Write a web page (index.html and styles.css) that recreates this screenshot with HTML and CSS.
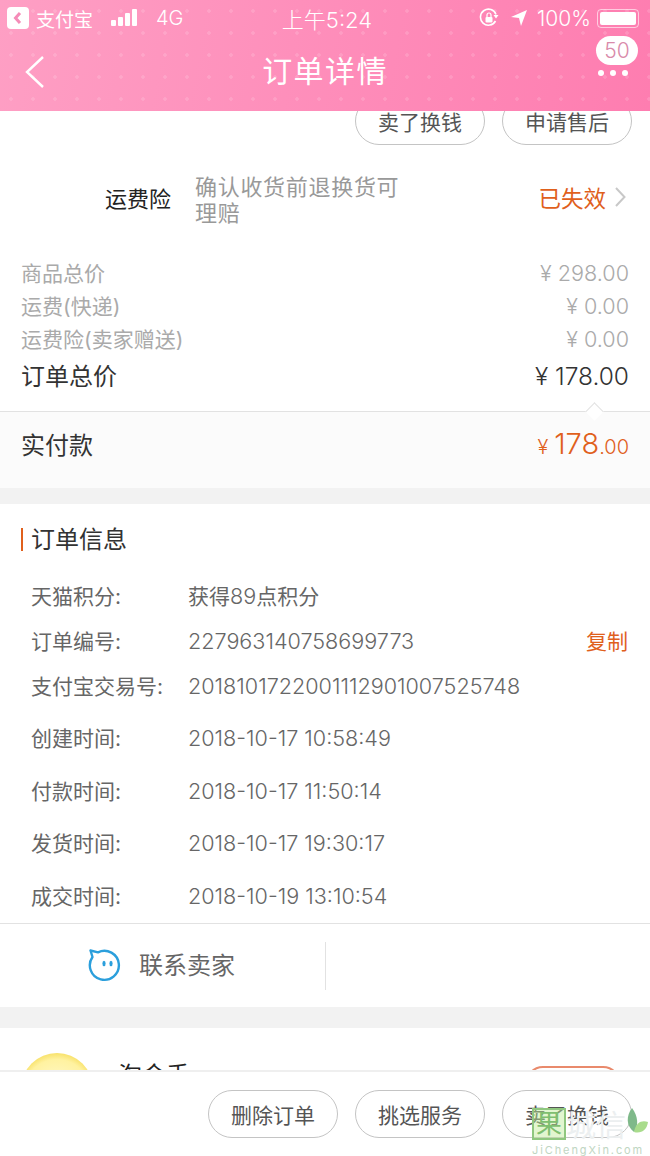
FILE: index.html
```html
<!DOCTYPE html>
<html lang="zh-CN">
  <head>
    <meta charset="UTF-8">
    <title>订单详情</title>
    <link rel="stylesheet" href="styles.css">
  </head>
  <body>
    <div class="page">

      <header class="top">
        <div class="status">
          <div class="status-left">
            <span class="app-back">
              <svg width="22" height="22" viewBox="0 0 22 22"><rect width="22" height="22" rx="4" fill="#fff"/><path d="M13 6 L8.5 11 L13 16" fill="none" stroke="#f58cb8" stroke-width="3"/></svg>
            </span>
            <span class="app-name">支付宝</span>
            <svg class="signal" width="28" height="18" viewBox="0 0 28 18"><g fill="#fff"><rect x="0" y="11" width="5" height="6" rx="1"/><rect x="7" y="8" width="5" height="9" rx="1"/><rect x="14" y="4" width="5" height="13" rx="1"/><rect x="21" y="0" width="5" height="17" rx="1"/></g></svg>
            <span class="net">4G</span>
          </div>
          <div class="clock">上午5:24</div>
          <div class="status-right">
            <svg width="20" height="20" viewBox="0 0 20 20"><path d="M16.5 13 A8 8 0 1 1 17 6.5" fill="none" stroke="#fff" stroke-width="1.6"/><path d="M14.5 7 L19.5 7 L17 10.5 Z" fill="#fff"/><rect x="6.5" y="9" width="7" height="5.5" rx="1" fill="#fff"/><path d="M8 9 V7 A2 2 0 0 1 12 7 V9" fill="none" stroke="#fff" stroke-width="1.2"/></svg>
            <svg class="arrow" width="16" height="16" viewBox="0 0 16 16"><path d="M16 0 L0 7 L8 8 L10 16 Z" fill="#fff"/></svg>
            <span class="pct">100%</span>
            <span class="battery"><span class="battery-fill"></span></span>
          </div>
        </div>
        <div class="nav">
          <svg class="nav-back" width="20" height="32" viewBox="0 0 20 32"><path d="M18 1 L2 16 L18 31" fill="none" stroke="#fff" stroke-width="2.4"/></svg>
          <h1>订单详情</h1>
          <div class="more">
            <span class="more-badge">50</span>
            <span class="more-dots"><i></i><i></i><i></i></span>
          </div>
        </div>
      </header>

      <div class="content">
        <div class="cut-actions">
          <span class="pill">卖了换钱</span>
          <span class="pill">申请售后</span>
        </div>

        <div class="insure">
          <span class="insure-name">运费险</span>
          <span class="insure-note">确认收货前退换货可理赔</span>
          <span class="insure-state">已失效</span>
          <svg width="12" height="20" viewBox="0 0 12 20"><path d="M2 1 L10.5 10 L2 19" fill="none" stroke="#c8c8c8" stroke-width="2"/></svg>
        </div>

        <div class="prices">
          <div class="price-row"><span>商品总价</span><span class="num">¥ 298.00</span></div>
          <div class="price-row"><span>运费(快递)</span><span class="num">¥ 0.00</span></div>
          <div class="price-row"><span>运费险(卖家赠送)</span><span class="num">¥ 0.00</span></div>
          <div class="price-row total"><span>订单总价</span><span class="num">¥ 178.00</span></div>
        </div>

        <div class="paid">
          <span class="paid-notch"></span>
          <span>实付款</span>
          <span class="paid-num"><small class="yen">¥</small>178<small>.00</small></span>
        </div>

        <div class="gap"></div>

        <section class="info">
          <h2>订单信息</h2>
          <div class="info-row"><span class="info-key">天猫积分:</span><span>获得<span class="num">89</span>点积分</span></div>
          <div class="info-row"><span class="info-key">订单编号:</span><span class="num">227963140758699773</span><span class="copy">复制</span></div>
          <div class="info-row"><span class="info-key">支付宝交易号:</span><span class="num">2018101722001112901007525748</span></div>
          <div class="times">
            <div class="info-row"><span class="info-key">创建时间:</span><span class="num">2018-10-17 10:58:49</span></div>
            <div class="info-row"><span class="info-key">付款时间:</span><span class="num">2018-10-17 11:50:14</span></div>
            <div class="info-row"><span class="info-key">发货时间:</span><span class="num">2018-10-17 19:30:17</span></div>
            <div class="info-row"><span class="info-key">成交时间:</span><span class="num">2018-10-19 13:10:54</span></div>
          </div>
        </section>

        <div class="contact">
          <div class="contact-btn">
            <svg width="34" height="34" viewBox="0 0 34 34"><path d="M10 3.3 A14.5 14.5 0 1 1 4.5 8 L2.5 1.5 Z" fill="#fff" stroke="#2b9fdc" stroke-width="2.4" stroke-linejoin="round"/><ellipse cx="16" cy="14.5" rx="1.6" ry="2.8" fill="#2b9fdc"/><ellipse cx="23" cy="14.5" rx="1.6" ry="2.8" fill="#2b9fdc"/></svg>
            <span class="contact-text">联系卖家</span>
          </div>
          <div class="contact-side"></div>
        </div>

        <div class="gap big"></div>

        <div class="seller">
          <span class="avatar"></span>
          <span class="seller-name">淘金手</span>
          <span class="seller-tag"></span>
        </div>
      </div>

      <footer class="actions">
        <span class="pill">删除订单</span>
        <span class="pill">挑选服务</span>
        <span class="pill">卖了换钱</span>
      </footer>

      <div class="mark">
        <div class="mark-top">
          <span class="mark-box">果</span>
          <span class="mark-word">城信</span>
          <svg width="22" height="30" viewBox="0 0 22 30"><path d="M6 0 C0 8 0 18 8 24 C13 18 12 8 6 0 Z" fill="#7fb98a"/><path d="M8 24 C10 14 16 12 22 14 C21 22 15 26 8 24 Z" fill="#a9dc8c"/></svg>
        </div>
        <div class="mark-url">JiChengXin.com</div>
      </div>

    </div>
  </body>
</html>
```

FILE: styles.css
```css
* { box-sizing: border-box; }

body {
  margin: 0;
  background: #fff;
  font-family: "Inter", "Noto Sans CJK SC", sans-serif;
  color: #666;
}

.page {
  position: relative;
  width: 650px;
  height: 1156px;
  overflow: hidden;
  display: flex;
  flex-direction: column;
}

/* pink header */
.top {
  height: 111px;
  flex: none;
  color: #fff;
  background-color: #ff85b5;
  background-image:
    radial-gradient(circle, rgba(255,255,255,.14) 1.5px, transparent 2px),
    linear-gradient(100deg, #fe9fc4 0%, #fe8fbb 45%, #fe7db0 100%);
  background-size: 22px 22px, 100% 100%;
}

.status {
  height: 36px;
  padding: 0 11px 0 7px;
  display: grid;
  grid-template-columns: 1fr auto 1fr;
  align-items: center;
}

.status-left, .status-right {
  display: flex;
  align-items: center;
}

.status-right { justify-content: flex-end; }

.app-back { display: flex; }

.app-name { margin-left: 7px; font-size: 19px; }

.signal { margin-left: 18px; }

.net { margin-left: 17px; font-size: 20px; font-weight: 300; }

.clock { margin-left: 8px; font-size: 22px; font-weight: 300; }

.arrow { margin-left: 12px; }

.pct { margin-left: 10px; font-size: 21px; font-weight: 300; }

.battery {
  width: 42px;
  height: 19px;
  margin-left: 6px;
  padding: 2px;
  border: 1px solid rgba(255,255,255,.6);
  border-radius: 4px;
}

.battery-fill {
  display: block;
  height: 100%;
  background: #fff;
  border-radius: 2px;
}

.nav {
  height: 75px;
  position: relative;
  padding-bottom: 10px;
  display: flex;
  align-items: center;
  justify-content: center;
}

.nav h1 {
  margin: 0;
  font-size: 30px;
  font-weight: normal;
  letter-spacing: 1.4px;
}

.nav-back {
  position: absolute;
  left: 25px;
  top: 20px;
}

.more {
  position: absolute;
  right: 12px;
  top: 0;
  width: 42px;
  display: flex;
  flex-direction: column;
  align-items: center;
}

.more-badge {
  width: 42px;
  height: 29px;
  background: #fff;
  border-radius: 15px;
  color: #d98aaa;
  font-size: 21px;
  font-weight: 300;
  line-height: 29px;
  text-align: center;
}

.more-dots {
  display: flex;
  gap: 6px;
  margin-top: 5px;
  margin-right: 9px;
}

.more-dots i {
  width: 6px;
  height: 6px;
  background: #fff;
  border-radius: 50%;
}

/* content under the header */
.content {
  flex: 1;
  min-height: 0;
  overflow: hidden;
}

.num { font-size: 21.6px; font-weight: 300; }

.pill {
  width: 130px;
  height: 48px;
  border: 1px solid #c4c4c4;
  border-radius: 24px;
  display: flex;
  align-items: center;
  justify-content: center;
  font-size: 21px;
  color: #555;
  flex: none;
}

.cut-actions {
  height: 34px;
  padding-right: 18px;
  display: flex;
  justify-content: flex-end;
  align-items: flex-end;
  gap: 17px;
}

.insure {
  height: 112px;
  padding: 0 24px 9px 105px;
  display: flex;
  align-items: center;
  font-size: 22px;
}

.insure-name { color: #222; width: 90px; flex: none; }

.insure-note {
  width: 212px;
  margin-top: 6px;
  color: #999;
  line-height: 26px;
  letter-spacing: .7px;
}

.insure-state {
  margin-left: auto;
  margin-right: 8px;
  color: #e0601c;
  font-size: 22.5px;
}

.prices { padding: 0 21px; }

.price-row {
  height: 33px;
  display: flex;
  justify-content: space-between;
  align-items: baseline;
  font-size: 21px;
  line-height: 33px;
  color: #aaa;
}

.price-row.total {
  height: 41px;
  font-size: 24px;
  line-height: 41px;
  color: #333;
}

.price-row.total .num { font-size: 24.5px; }

.paid {
  position: relative;
  height: 77px;
  margin-top: 14px;
  padding: 0 21px 14px;
  display: flex;
  justify-content: space-between;
  align-items: center;
  background: #fbfbfb;
  border-top: 1px solid #e2e2e2;
  font-size: 24px;
  color: #333;
}

.paid-notch {
  position: absolute;
  right: 49px;
  top: -7px;
  width: 13px;
  height: 13px;
  background: #fff;
  border-top: 1px solid #e2e2e2;
  border-left: 1px solid #e2e2e2;
  transform: rotate(45deg);
}

.paid-num { color: #e0601c; font-size: 29px; font-weight: 300; }

.paid-num small { font-size: 20px; }

.paid-num .yen { margin-right: 6px; }

.gap { height: 16px; background: #f2f2f2; }

.gap.big { height: 21px; }

.info {
  height: 420px;
  padding-top: 24px;
  border-bottom: 1px solid #e2e2e2;
}

.info h2 {
  margin: 0 0 23px 21px;
  padding-left: 8px;
  border-left: 2px solid #e0601c;
  font-size: 24px;
  font-weight: normal;
  line-height: 23px;
  color: #333;
}

.info-row {
  height: 45px;
  padding: 0 22px 0 31px;
  display: flex;
  align-items: baseline;
  font-size: 21px;
  line-height: 45px;
}

.times { padding-top: 3px; }

.times .info-row { height: 52.5px; line-height: 52.5px; }

.info-key { width: 157px; flex: none; }

.copy { margin-left: auto; color: #e0601c; }

.contact {
  height: 83px;
  display: flex;
  align-items: center;
}

.contact-btn {
  width: 326px;
  height: 48px;
  padding-left: 88px;
  border-right: 1px solid #e2e2e2;
  display: flex;
  align-items: center;
  gap: 17px;
  font-size: 24px;
}

.contact-text { padding-bottom: 4px; }

.seller {
  position: relative;
  height: 80px;
}

.avatar {
  position: absolute;
  left: 21px;
  top: 25px;
  width: 72px;
  height: 72px;
  border-radius: 50%;
  background: radial-gradient(circle at 50% 55%, #fffbd8 0%, #fff2a0 62%, #f6dc58 78%, #fbe98c 100%);
}

.seller-name {
  position: absolute;
  left: 118px;
  top: 28px;
  font-size: 24px;
  color: #222;
}

.seller-tag {
  position: absolute;
  left: 525px;
  top: 38px;
  width: 96px;
  height: 40px;
  border: 2px solid #e98a6c;
  border-radius: 18px;
}

/* fixed bar at the bottom */
.actions {
  position: absolute;
  left: 0;
  right: 0;
  bottom: 0;
  height: 86px;
  padding: 18px 18px 0 0;
  display: flex;
  justify-content: flex-end;
  gap: 17px;
  background: #fff;
  border-top: 2px solid #efefef;
}

/* watermark over the corner */
.mark {
  position: absolute;
  right: 0;
  top: 1108px;
  width: 118px;
}

.mark-top { display: flex; align-items: flex-start; }

.mark-box {
  width: 34px;
  height: 32px;
  flex: none;
  border: 2px solid #8fc77f;
  background: rgba(190,235,150,.45);
  color: #7fbf70;
  font-size: 26px;
  line-height: 28px;
  text-align: center;
}

.mark-word {
  flex: none;
  color: #eceff0;
  font-size: 30px;
  line-height: 34px;
  white-space: nowrap;
}

.mark-url {
  margin-top: 1px;
  color: #c0d6c2;
  font-size: 11px;
  letter-spacing: 1.9px;
  white-space: nowrap;
}
```
